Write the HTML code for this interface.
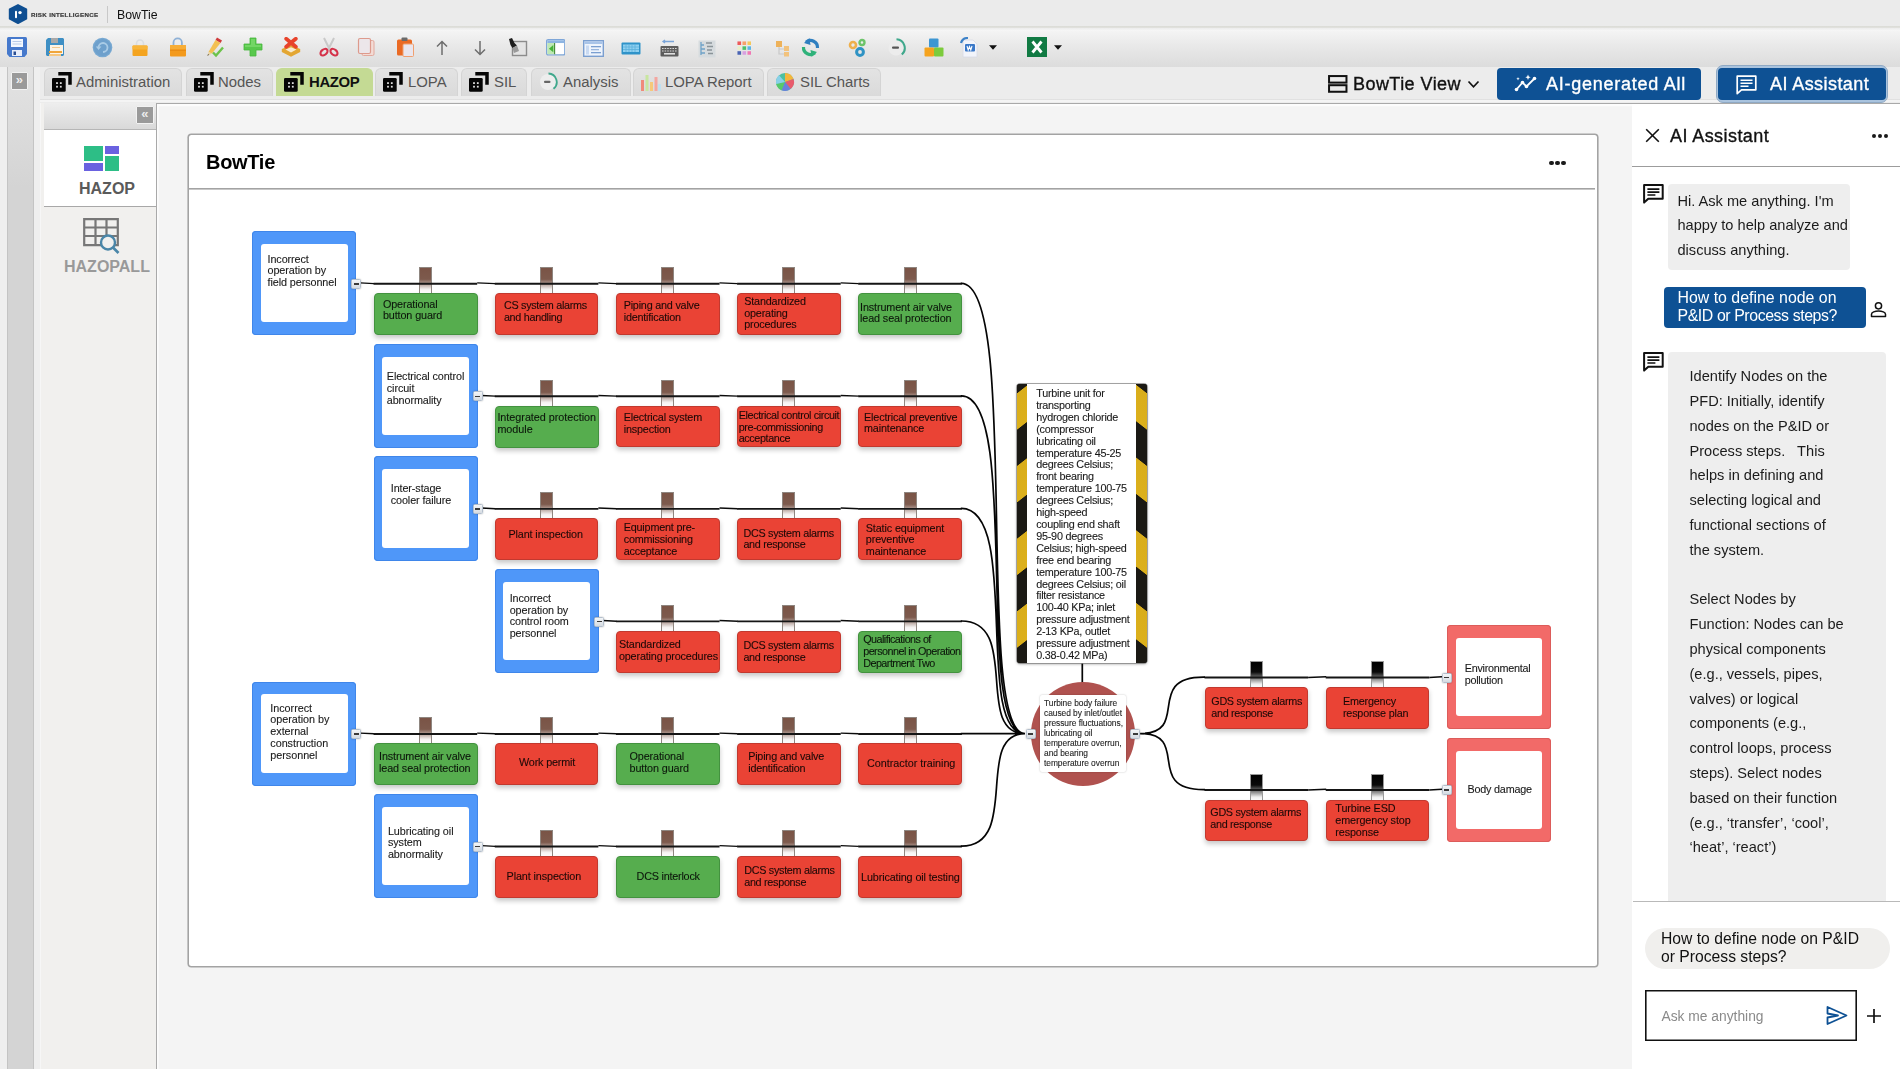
<!DOCTYPE html>
<html lang="en">
<head>
<meta charset="utf-8">
<title>BowTie</title>
<style>
*{box-sizing:border-box;margin:0;padding:0}
html,body{width:1900px;height:1069px;overflow:hidden;background:#f4f4f4;font-family:"Liberation Sans",sans-serif;color:#222}
.abs{position:absolute}
.gl{position:absolute;left:0;top:0;width:0;height:0;will-change:transform}
#titlebar{position:absolute;left:0;top:0;width:1900px;height:27px;background:#ebebeb}
#brand,#appname,#cardtitle,.g{will-change:transform}
#titlebar .sep{position:absolute;left:0;top:26px;width:1900px;height:2px;background:linear-gradient(#dadbd5,#e2e2de)}
#titlebar .sep2{position:absolute;left:0;top:28px;width:1900px;height:3px;background:linear-gradient(#ececec,#f7f7f7)}
#brand{position:absolute;left:30.8px;top:9.5px;font-size:6.2px;font-weight:bold;letter-spacing:.33px;-webkit-text-stroke:.2px #3a3a3a;color:#3a3a3a;white-space:nowrap;line-height:10px}
#tdiv{position:absolute;left:107px;top:6px;width:1px;height:17px;background:#c8c8c8}
#appname{position:absolute;left:117px;top:7.2px;font-size:12.3px;line-height:16px;color:#111;white-space:nowrap}
#toolbar{position:absolute;left:0;top:31px;width:1900px;height:36px;background:linear-gradient(#f4f4f4,#e9e9e9 40%,#dcdcdc)}
#tabrow{position:absolute;left:0;top:67px;width:1900px;height:36px;background:#ececec}
#tabline{position:absolute;left:40px;top:99px;width:1860px;height:3px;background:linear-gradient(#dfdfdf,#e2e2e2 33%,#f4f4f4 40%,#f4f4f4)}
.tab{position:absolute;top:68px;height:28px;border:1px solid #d4d4d4;border-bottom:none;border-radius:6px 6px 0 0;background:linear-gradient(#e3e3e3,#dadada);font-size:14.9px;color:#555;white-space:nowrap}
.tab span{position:absolute;top:4px;line-height:19px}
.tab svg{position:absolute;left:6.6px;top:3.2px}
.tab.on{background:#c4da94;border-color:#c4da94;color:#111}
.tab.on span{font-weight:bold;letter-spacing:-.35px}
#lstrip0{position:absolute;left:0;top:67px;width:7px;height:1002px;background:#efefef}
#lstrip{position:absolute;left:7px;top:67px;width:27px;height:1002px;background:linear-gradient(#e3e3e3,#d4d4d4 12%);border-left:1px solid #c4c4c4;border-right:1px solid #c4c4c4}
#lstrip2{position:absolute;left:34px;top:67px;width:6px;height:1002px;background:#efefef}
.cbtn{position:absolute;width:17.5px;height:18px;background:#9a9a9a;border:1.1px solid #f2f2f2;border-radius:1px;color:#ededed;font-size:13px;line-height:13.5px;text-align:center;font-weight:bold}
#side{position:absolute;left:40px;top:102.6px;width:117px;height:967px;background:#f1f0ee;border-left:1.2px solid #f6f6f6}
#sidehead{position:absolute;left:44px;top:102.6px;width:112.3px;height:27px;background:linear-gradient(#eeeeee,#d9d9d9);border-bottom:1.6px solid #b6b6b6}
#it1{position:absolute;left:44px;top:129.6px;width:112.3px;height:77.4px;background:#fff;border-bottom:1.5px solid #a8a8a8}
.sl{position:absolute;font-weight:bold;font-size:16px;white-space:nowrap;line-height:16px}
#main{position:absolute;left:156.2px;top:102.9px;width:1744px;height:967px;background:#f4f4f4;border-left:1.3px solid #a9a9a9;border-top:1.2px solid #a9a9a9;box-shadow:inset 1.6px 2.2px 0 0 #fcfcfc}
#card{position:absolute;left:189.2px;top:135.2px;width:1407.8px;height:831.3px;background:#fff;box-shadow:0 0 0 1.6px #a3a3a3;border-radius:2.5px}
#cardhead{position:absolute;left:0;top:0;width:1405.8px;height:52.6px;box-shadow:0 1.6px 0 0 #a3a3a3}
#cardtitle{position:absolute;left:16.8px;top:14.6px;font-size:20px;font-weight:bold;letter-spacing:-.3px;line-height:24px;color:#000}
.dots{position:absolute;width:16px;height:4px}
.dots i{position:absolute;top:0;width:4.1px;height:4.1px;border-radius:50%;background:#1a1a1a}

.thr,.con{position:absolute;width:104px;height:104.2px;border-radius:4px;background:#4f97f9;box-shadow:inset 0 0 0 1px #3f86ea}
.con{background:#f26a68;box-shadow:inset 0 0 0 1px #dc5c5a}
.thr i,.con i{position:absolute;left:8.6px;top:12.9px;width:86.8px;height:78.3px;background:#fff;border-radius:3px}
.bar{position:absolute;width:103.6px;height:41.7px;border-radius:4px;box-shadow:0 3px 5px rgba(0,0,0,.22)}
.bar.g{background:#56ad4e;border:1px solid #43923f}
.bar.r{background:#ea4335;border:1px solid #c2392f}
.post{position:absolute;width:13px;height:26px;border:.8px solid #8f8680;border-bottom:none;background:linear-gradient(#7a5446,#7d5a4d 45%,#bfaea8 68%,#f4f1f0 85%,#fff)}
.post.k{border-color:#999;background:linear-gradient(#000,#0a0a0a 40%,#8a8a8a 68%,#eee 88%,#fff)}
.bt,.tt,.ctx{position:absolute;white-space:nowrap;font-size:10.8px;line-height:11.85px;color:rgba(0,0,0,.86);-webkit-text-stroke:.12px rgba(0,0,0,.8)}
.tt{color:#222}
.hz{line-height:11.9px}
.ctx{line-height:9.95px;color:#2a2a2a}
.cb{position:absolute;width:10px;height:10px;background:linear-gradient(#f4f6f8,#d5dbe2);border:1px solid #b4bfcc;border-radius:1.5px;box-shadow:0 0 1.5px rgba(0,0,0,.35)}
.cb:after{content:"";position:absolute;left:1.5px;top:3.2px;width:5px;height:1.6px;background:#3a3a3a}
#haz{position:absolute;left:1016.8px;top:384.4px;width:129.8px;height:278.4px;border-radius:3px;overflow:hidden;background:#111;box-shadow:0 0 0 .7px #888,0 1px 3px rgba(0,0,0,.4)}
#hazl,#hazr{position:absolute;top:0;width:11px;height:100%}
#hazl{left:0;background:repeating-linear-gradient(142deg,#d9ad1b 7.7px,#dcb01c 35.7px,#1b1914 36.4px,#1b1914 64.3px,#d9ad1b 64.98px)}
#hazr{right:0;background:repeating-linear-gradient(218deg,#d9ad1b 7.7px,#dcb01c 35.7px,#1b1914 36.4px,#1b1914 64.3px,#d9ad1b 64.98px)}
#hazw{position:absolute;left:10.3px;top:0;width:109.2px;height:100%;background:#fff}
#circ{position:absolute;left:1031.3px;top:681.8px;width:103.8px;height:103.8px;border-radius:50%;background:#b0524f}
#circw{position:absolute;left:1040px;top:694.5px;width:86.4px;height:77.4px;background:#fff;border-radius:2px;box-shadow:0 0 2px rgba(0,0,0,.25)}

#panel{position:absolute;left:1632px;top:104px;width:268px;height:965px;background:#fff}
#phead{position:absolute;left:1632px;top:165.7px;width:268px;height:1.6px;background:#9c9c9c}
#ptitle{position:absolute;left:1670px;top:125px;font-size:18px;letter-spacing:.42px;line-height:22px;color:#111;white-space:nowrap;-webkit-text-stroke:.35px #111}
.bub{position:absolute;background:#eeeeee;border-radius:4px}
.ct{position:absolute;font-size:14.6px;line-height:24.8px;color:#1b1b1b;white-space:nowrap}
.ut{position:absolute;font-size:15.9px;line-height:18px;color:#fff;white-space:nowrap}
#pdiv{position:absolute;left:1633px;top:900.5px;width:267px;height:1.2px;background:#b9b9b9}
#pill{position:absolute;left:1644.5px;top:927.5px;width:245.5px;height:41.5px;border-radius:21px;background:#f0efed}
#inp{position:absolute;left:1645px;top:990px;width:212px;height:51px;box-shadow:inset 0 0 0 1.6px #111;background:#fff}
</style>
</head>
<body>
<div id="titlebar">
  <svg class="abs" style="left:8px;top:3px" width="20" height="22" viewBox="0 0 20 22"><path d="M10 2 18.3 6.3v9.5L10 20.1 1.7 15.8V6.3z" fill="#0f4f92" stroke="#0f4f92" stroke-width="1.8" stroke-linejoin="round"/><rect x="7" y="7.7" width="2" height="7.6" rx="1" fill="#fff"/><circle cx="12" cy="9.6" r="1.7" fill="#fff"/></svg>
  <div id="brand">RISK INTELLIGENCE</div>
  <div id="tdiv"></div>
  <div id="appname">BowTie</div>
  <div class="sep"></div><div class="sep2"></div>
</div>
<div id="toolbar">
<!-- save -->
<svg class="abs" style="left:7px;top:6px" width="20" height="20" viewBox="0 0 20 20"><path d="M0 1.5Q0 0 1.5 0h17Q20 0 20 1.5V17l-2.5 3h-15L0 17z" fill="#4679cc"/><rect x="4" y="2" width="12" height="8" fill="#f4f8ff"/><rect x="5.5" y="4" width="9" height="1" fill="#b9cbe8"/><rect x="5.5" y="6.5" width="9" height="1" fill="#b9cbe8"/><rect x="5" y="13" width="10" height="6" fill="#e8eefb"/><rect x="6.5" y="14.5" width="2.5" height="3.5" fill="#2c4f92"/></svg>
<!-- save as -->
<svg class="abs" style="left:45px;top:6px" width="20" height="20" viewBox="0 0 20 20"><path d="M1 3 3 1h15l1 1v16l-1 1H2l-1-1z" fill="#3e8fc4"/><rect x="6" y="1" width="7" height="5" fill="#a9a9a9"/><rect x="5" y="8" width="13" height="9" fill="#fbf3e6"/><rect x="4" y="14" width="13" height="2" fill="#f0a53a"/><rect x="4" y="17" width="12" height="2" fill="#f6c781"/><rect x="7" y="10" width="8" height="1" fill="#f3c98e"/></svg>
<!-- refresh -->
<svg class="abs" style="left:92px;top:6px" width="21" height="21" viewBox="0 0 21 21"><circle cx="10.5" cy="10.5" r="9.8" fill="#78a9d2"/><circle cx="10.5" cy="10.5" r="8.6" fill="#6ea0cc"/><path d="M6.5 10.5a4.5 4.5 0 1 1 4.5 4.5" fill="none" stroke="#a9cbe6" stroke-width="1.8"/><path d="M3.8 9.5 6.6 13l2.8-3.5z" fill="#a9cbe6"/></svg>
<!-- lock -->
<svg class="abs" style="left:130px;top:6px" width="20" height="20" viewBox="0 0 20 20"><path d="M6.5 9V6.5a3.5 3.5 0 0 1 7 0V9" fill="none" stroke="#d9dde2" stroke-width="1.6"/><rect x="2.5" y="8.5" width="15" height="10.5" rx="1" fill="#f4a420"/><rect x="2.5" y="8.5" width="15" height="4" rx="1" fill="#f8b53a"/></svg>
<!-- unlock -->
<svg class="abs" style="left:168px;top:6px" width="20" height="20" viewBox="0 0 20 20"><path d="M5.5 9V5.5a4.2 4.2 0 0 1 8.4 0V9" fill="none" stroke="#8fb1d6" stroke-width="1.8"/><rect x="2" y="8" width="16" height="11.5" rx="1" fill="#f39a1d"/><rect x="2" y="8" width="16" height="4" rx="1" fill="#f7ad36"/><rect x="2" y="13" width="16" height="1" fill="#e88c14"/></svg>
<!-- pencil -->
<svg class="abs" style="left:205px;top:5px" width="20" height="22" viewBox="0 0 20 22"><path d="M12 1.5 17 4.5 15.5 7 10.5 4z" fill="#cf3a3a"/><path d="M10.5 4 15.5 7 7 17.5 3.5 16z" fill="#f3c052"/><path d="M3.5 16 7 17.5 2.5 20z" fill="#e8d3a4"/><path d="M2.5 20 3.8 18.8 3 18z" fill="#222"/><path d="M8 16.5 11 19.5 18 11.5" fill="none" stroke="#6cc34a" stroke-width="2.4"/></svg>
<!-- plus -->
<svg class="abs" style="left:243px;top:6px" width="20" height="20" viewBox="0 0 20 20"><path d="M7 1h6v6h6v6h-6v6H7v-6H1V7h6z" fill="#58c84c" stroke="#48b63c" stroke-width=".8" stroke-linejoin="round"/><path d="M8 2h4v6h6v2H2V8h6z" fill="#7fdc70" opacity=".7"/></svg>
<!-- delete -->
<svg class="abs" style="left:281px;top:6px" width="20" height="20" viewBox="0 0 20 20"><path d="M.8 12 10 8 19.2 12V15L10 19.8.8 15z" fill="#e3a632"/><path d="M4.5 12.5 10 10.3 15.5 12.5 10 15.5z" fill="#f7ead0"/><path d="M5.2 1.8 14.8 9.8M14.8 1.8 5.2 9.8" stroke="#e8432b" stroke-width="3.8" stroke-linecap="round"/></svg>
<!-- scissors -->
<svg class="abs" style="left:319px;top:5px" width="20" height="22" viewBox="0 0 20 22"><path d="M5 2 11 14M15 2 9 14" stroke="#c9c9c9" stroke-width="2"/><ellipse cx="5" cy="16.2" rx="4" ry="2.7" transform="rotate(-40 5 16.2)" fill="none" stroke="#d5324a" stroke-width="2.1"/><ellipse cx="15" cy="16.2" rx="4" ry="2.7" transform="rotate(40 15 16.2)" fill="none" stroke="#d5324a" stroke-width="2.1"/></svg>
<!-- copy -->
<svg class="abs" style="left:357px;top:6px" width="20" height="20" viewBox="0 0 20 20"><rect x="5" y="3.5" width="12" height="15" rx="1.5" fill="#f3dcd6" stroke="#e2a89c" stroke-width="1"/><rect x="1.5" y="1.5" width="12" height="15" rx="1.5" fill="#ece6ea" stroke="#dd9a8c" stroke-width="1.2"/></svg>
<!-- paste -->
<svg class="abs" style="left:395px;top:5px" width="20" height="22" viewBox="0 0 20 22"><rect x="2" y="3.5" width="15" height="16" rx="1.5" fill="#ea6a24"/><rect x="6.5" y="1.5" width="6" height="3.5" rx="1" fill="#6a6a6a"/><rect x="8" y="8" width="10.5" height="12.5" rx="1" fill="#e9e6ee" stroke="#f0a070" stroke-width="1"/></svg>
<!-- up -->
<svg class="abs" style="left:434px;top:8px" width="16" height="18" viewBox="0 0 16 18"><path d="M8 16V2.5M3 7.5 8 2.5 13 7.5" fill="none" stroke="#6d6d6d" stroke-width="1.5"/></svg>
<!-- down -->
<svg class="abs" style="left:472px;top:8px" width="16" height="18" viewBox="0 0 16 18"><path d="M8 2v13.5M3 10.5 8 15.5 13 10.5" fill="none" stroke="#6d6d6d" stroke-width="1.5"/></svg>
<!-- stamp -->
<svg class="abs" style="left:508px;top:6px" width="20" height="20" viewBox="0 0 20 20"><rect x="4.5" y="4.5" width="14" height="14" fill="#e4e4e4" stroke="#8c8c8c" stroke-width="1.4"/><path d="M1 2 4 1 6.5 6 9 8.5 4.5 11 2.5 8z" fill="#1d1d1d"/><path d="M4.5 11 9 8.5 11 14 6 16z" fill="#9a9a9a"/></svg>
<!-- panel-left -->
<svg class="abs" style="left:545.5px;top:8px" width="19.5" height="16.5" viewBox="0 0 20 18" preserveAspectRatio="none"><rect x=".7" y=".7" width="18.6" height="16.6" rx="1.5" fill="#fff" stroke="#7ea6d8" stroke-width="1.4"/><rect x="1.4" y="1.4" width="17.2" height="3" fill="#8db4e2"/><rect x="1.4" y="4.4" width="7.6" height="12.2" fill="#bfe8b4"/><rect x="8.2" y="4.4" width="1.2" height="12.2" fill="#4a8f3c"/><path d="M7.5 6.5v8L3 10.5z" fill="#46b339"/></svg>
<!-- form -->
<svg class="abs" style="left:583px;top:9px" width="21" height="17" viewBox="0 0 21 17"><rect x=".7" y=".7" width="19.6" height="15.6" fill="#eef4fc" stroke="#7b9fd0" stroke-width="1.4"/><rect x="1.4" y="1.4" width="18.2" height="2.6" fill="#a9c4e8"/><rect x="3" y="5.5" width="3" height="9" fill="#c9daf2"/><rect x="8" y="6" width="10" height="1.3" fill="#7b9fd0"/><rect x="8" y="9" width="8" height="1.3" fill="#9ab6dd"/><rect x="8" y="12" width="10" height="1.3" fill="#7b9fd0"/></svg>
<!-- keyboard blue -->
<svg class="abs" style="left:621px;top:11px" width="20" height="13" viewBox="0 0 20 13"><rect x=".5" y=".5" width="19" height="12" rx="1" fill="#2f93c9"/><rect x="2" y="2.5" width="16" height="7.5" fill="#8fd0f0"/><path d="M2 5h16M2 7.5h16M5 2.5v7.5M8 2.5v7.5M11 2.5v7.5M14 2.5v7.5" stroke="#5ab0dc" stroke-width=".8"/></svg>
<!-- keyboard gray -->
<svg class="abs" style="left:660px;top:8px" width="19" height="19" viewBox="0 0 19 19"><path d="M4 2.5h10M5 1l-2 1.5L5 4" fill="none" stroke="#7aa4d8" stroke-width="1.3"/><rect x=".5" y="7" width="18" height="10.5" rx="1" fill="#5d5d5d"/><path d="M2 9.5h15M2 12h15" stroke="#d8d8d8" stroke-width="1.2" stroke-dasharray="1.6 1"/><rect x="4" y="14" width="11" height="1.6" fill="#e0e0e0"/></svg>
<!-- tree -->
<svg class="abs" style="left:698px;top:9px" width="18" height="18" viewBox="0 0 18 18"><rect x=".5" y=".5" width="17" height="17" fill="#d6dbde"/><path d="M3 2v13M3 5h3M3 9h4M3 13h4" stroke="#6fa3c8" stroke-width="1.3" fill="none"/><path d="M8 3h6M9 6.5h6M9 10h5M10 13.5h5" stroke="#8a9499" stroke-width="1.5"/></svg>
<!-- colour grid -->
<svg class="abs" style="left:736.5px;top:9.5px" width="14.6" height="14.2" viewBox="0 0 16 16" preserveAspectRatio="none"><rect x=".5" y=".5" width="4" height="4" fill="#ee5a5a"/><rect x="6" y=".5" width="4" height="4" fill="#f5a06a"/><rect x="11.5" y=".5" width="4" height="4" fill="#f5c85a"/><rect x=".5" y="6" width="4" height="4" fill="#e9f0c8"/><rect x="6" y="6" width="4" height="4" fill="#4cc068"/><rect x="11.5" y="6" width="4" height="4" fill="#5ab4e6"/><rect x=".5" y="11.5" width="4" height="4" fill="#4a64b4"/><rect x="6" y="11.5" width="4" height="4" fill="#d8a0e0"/><rect x="11.5" y="11.5" width="4" height="4" fill="#f078b4"/></svg>
<!-- hierarchy -->
<svg class="abs" style="left:775px;top:9px" width="15" height="17" viewBox="0 0 15 17"><rect x="1" y="1" width="6" height="6" fill="#eeb25a"/><rect x="9" y="6" width="5" height="5" fill="#f2c27c"/><rect x="9" y="12" width="5" height="4.5" fill="#f2c27c"/><path d="M4 7v7h5M4 9h5" fill="none" stroke="#c8c8c8" stroke-width="1.2"/></svg>
<!-- sync -->
<svg class="abs" style="left:801px;top:6px" width="19" height="21" viewBox="0 0 19 21"><path d="M16.5 11A7 7 0 0 0 5 5.2" fill="none" stroke="#2f7fc0" stroke-width="3.2"/><path d="M8.5 1 3 6l6.5 2z" fill="#2f7fc0"/><path d="M2.5 10A7 7 0 0 0 14 15.8" fill="none" stroke="#2fb27a" stroke-width="3.2"/><path d="M10.5 20 16 15l-6.5-2z" fill="#2fb27a"/></svg>
<!-- gears -->
<svg class="abs" style="left:848px;top:7px" width="19" height="20" viewBox="0 0 19 20"><circle cx="5" cy="7" r="3" fill="none" stroke="#efb04c" stroke-width="2.6"/><circle cx="14" cy="4.5" r="2.5" fill="none" stroke="#6dc46a" stroke-width="2.4"/><circle cx="12" cy="14" r="3.4" fill="none" stroke="#2f93c4" stroke-width="3"/></svg>
<!-- gauge -->
<svg class="abs" style="left:888px;top:6px" width="19" height="21" viewBox="0 0 19 21"><circle cx="8" cy="11" r="7.5" fill="#ececec"/><path d="M8.5 2.3A8.7 8.7 0 0 1 13.8 17.5" fill="none" stroke="#3fa88c" stroke-width="2"/><rect x="4" y="9.5" width="7" height="2.2" rx="1" fill="#555"/></svg>
<!-- blocks -->
<svg class="abs" style="left:924px;top:7px" width="20" height="19" viewBox="0 0 20 19"><rect x="5" y=".5" width="9.5" height="9" rx="1" fill="#3d96d2"/><rect x=".5" y="9.5" width="9.5" height="9" rx="1" fill="#f5a31e"/><rect x="10" y="9.5" width="9.5" height="9" rx="1" fill="#7ccb3c"/></svg>
<!-- word -->
<svg class="abs" style="left:960px;top:6px" width="19" height="21" viewBox="0 0 19 21"><path d="M3 3h10l4 4v13H3z" fill="#f2f4fa" stroke="#d8dbe6" stroke-width=".8"/><path d="M1 6a7 7 0 0 1 7-5" fill="none" stroke="#3d82c8" stroke-width="2.2"/><rect x="5" y="7" width="10" height="7.5" rx="1" fill="#3a78c8"/><path d="M7 9l1.2 4 1.3-3.5 1.3 3.5L12 9" fill="none" stroke="#fff" stroke-width="1.1"/></svg>
<svg class="abs" style="left:989px;top:14px" width="8" height="5" viewBox="0 0 8 5"><path d="M0 .3h8L4 4.8z" fill="#111"/></svg>
<!-- excel -->
<svg class="abs" style="left:1027px;top:6px" width="20" height="20" viewBox="0 0 20 20"><rect width="20" height="20" fill="#117a43"/><path d="M5.5 4.5 14.5 15.5M14.5 4.5 5.5 15.5" stroke="#fff" stroke-width="2.8"/></svg>
<svg class="abs" style="left:1054px;top:14px" width="8" height="5" viewBox="0 0 8 5"><path d="M0 .3h8L4 4.8z" fill="#111"/></svg>
</div>
<div id="tabrow"></div>
<div id="lstrip0"></div><div id="lstrip"></div><div id="lstrip2"></div>
<div class="cbtn" style="left:10.6px;top:71.6px">&raquo;</div>
<div id="tabline"></div>
<svg width="0" height="0" style="position:absolute"><defs>
<g id="ticon"><rect x="0" y="6" width="13.7" height="13.8" rx="1.3" fill="#050505"/><path d="M6.3 1.7H18V12.8" fill="none" stroke="#050505" stroke-width="3.5"/><rect x="4.1" y="10.2" width="1.8" height="1.8" fill="#ddd"/><rect x="7.9" y="10.2" width="1.8" height="1.8" fill="#ddd"/><rect x="4.1" y="13.8" width="1.8" height="1.8" fill="#ddd"/><rect x="7.9" y="13.8" width="1.8" height="1.8" fill="#ddd"/></g>
</defs></svg>
<div class="tab" style="left:44px;width:138px"><svg width="20" height="20"><use href="#ticon"/></svg><span style="left:31px">Administration</span></div>
<div class="tab" style="left:186px;width:87px"><svg width="20" height="20"><use href="#ticon"/></svg><span style="left:31px">Nodes</span></div>
<div class="tab on" style="left:276px;width:97px"><svg width="20" height="20"><use href="#ticon"/></svg><span style="left:32px">HAZOP</span></div>
<div class="tab" style="left:375px;width:83px"><svg width="20" height="20"><use href="#ticon"/></svg><span style="left:32px">LOPA</span></div>
<div class="tab" style="left:461px;width:66px"><svg width="20" height="20"><use href="#ticon"/></svg><span style="left:32px">SIL</span></div>
<div class="tab" style="left:531px;width:100px"><svg width="20" height="20" viewBox="0 0 20 20"><circle cx="9" cy="10" r="8" fill="#ededed"/><path d="M9.5 1.5A8.6 8.6 0 0 1 14.5 16.8" fill="none" stroke="#3fa88c" stroke-width="1.8"/><rect x="5" y="8.8" width="6.5" height="2.2" rx="1" fill="#666"/></svg><span style="left:31px">Analysis</span></div>
<div class="tab" style="left:633px;width:131px"><svg width="20" height="20" viewBox="0 0 20 20"><rect x="0" y="8" width="3" height="11" fill="#f08a7a"/><rect x="4.5" y="3" width="3" height="16" fill="#c8e6a0"/><rect x="9" y="10" width="3" height="9" fill="#f6c97a"/><rect x="13.5" y="5" width="3" height="14" fill="#f4a6a0"/><rect x="17" y="12" width="3" height="7" fill="#bfe0f0"/></svg><span style="left:31px">LOPA Report</span></div>
<div class="tab" style="left:767px;width:114px"><svg width="20" height="20" viewBox="0 0 20 20"><circle cx="10" cy="10" r="9" fill="#4cc0a0"/><path d="M10 10V1a9 9 0 0 1 8.5 6z" fill="#f3b63c"/><path d="M10 10 18.5 7a9 9 0 0 1-3 10z" fill="#e85a6c"/><path d="M10 10 15.5 17a9 9 0 0 1-9 1.2z" fill="#6a7fdc"/><path d="M10 10 6.5 18.2A9 9 0 0 1 1.2 12z" fill="#58c86a"/><path d="M10 10 1.2 12A9 9 0 0 1 4 3.3z" fill="#8ad0e8"/></svg><span style="left:32px">SIL Charts</span></div>
<!-- right buttons -->
<svg class="abs" style="left:1327.5px;top:75px" width="20" height="18.3" viewBox="0 0 21 19" preserveAspectRatio="none"><rect x="1.1" y="1.1" width="18.3" height="6.8" fill="none" stroke="#111" stroke-width="2.1"/><rect x="1.1" y="10.6" width="18.3" height="6.8" fill="none" stroke="#111" stroke-width="2.1"/></svg>
<div class="abs" style="left:1353px;top:73px;font-size:18px;letter-spacing:.45px;line-height:22px;color:#111;white-space:nowrap;will-change:transform;-webkit-text-stroke:.35px #111">BowTie View</div>
<svg class="abs" style="left:1467px;top:80px" width="13" height="9" viewBox="0 0 13 9"><path d="M1.5 1.5 6.5 6.8 11.5 1.5" fill="none" stroke="#111" stroke-width="1.7"/></svg>
<div class="abs" style="left:1497px;top:68px;width:204px;height:32px;background:#0e5194;border-radius:4px"></div>
<svg class="abs" style="left:1514px;top:74px" width="24" height="18" viewBox="0 0 24 18"><path d="M2.5 15.5 8.5 8.5 12.5 12.5 20.5 4.5" fill="none" stroke="#fff" stroke-width="1.8"/><circle cx="2.5" cy="15.5" r="1.8" fill="#fff"/><circle cx="8.5" cy="8.5" r="1.8" fill="#fff"/><circle cx="12.5" cy="12.5" r="1.8" fill="#fff"/><circle cx="20.5" cy="4.5" r="1.8" fill="#fff"/><path d="M14 .5l.8 1.9 1.9.8-1.9.8L14 5.9l-.8-1.9-1.9-.8 1.9-.8zM4 3l.5 1.2 1.2.5-1.2.5L4 6.4 3.5 5.2 2.3 4.7l1.2-.5z" fill="#fff"/></svg>
<div class="abs" style="left:1546px;top:73px;font-size:18px;letter-spacing:.75px;line-height:22px;color:#fff;white-space:nowrap;will-change:transform;-webkit-text-stroke:.35px #fff">AI-generated All</div>
<div class="abs" style="left:1716px;top:65px;width:172px;height:37.5px;background:#a9c3de;border-radius:7px;border:1px solid #8fa9c4"></div>
<div class="abs" style="left:1718px;top:68px;width:168px;height:31.5px;background:#0e5194;border-radius:4px"></div>
<svg class="abs" style="left:1736px;top:75px" width="21" height="20" viewBox="0 0 21 20"><path d="M1.2 1.2h18.6v13.6H5.5L1.2 18.6z" fill="none" stroke="#fff" stroke-width="1.7" stroke-linejoin="round"/><path d="M4.5 5.2h12M4.5 8.2h12M4.5 11.2h8" stroke="#fff" stroke-width="1.5"/></svg>
<div class="abs" style="left:1770px;top:73px;font-size:18px;letter-spacing:.42px;line-height:22px;color:#fff;white-space:nowrap;will-change:transform;-webkit-text-stroke:.35px #fff">AI Assistant</div>
<!-- side -->
<div id="side"></div>
<div id="main"></div>
<div id="sidehead"></div>
<div class="cbtn" style="left:136.2px;top:106.4px">&laquo;</div>
<div id="it1"></div>
<svg class="abs" style="left:84px;top:146px" width="35" height="25" viewBox="0 0 35 25"><rect x="0" y="0" width="19" height="15" fill="#2dbe86"/><rect x="21" y="0" width="14" height="8" fill="#6a62e0"/><rect x="0" y="17" width="19" height="8" fill="#6a62e0"/><rect x="21" y="10" width="14" height="15" fill="#2dbe86"/></svg>
<div class="sl" style="left:79px;top:181px;color:#5a5a5a">HAZOP</div>
<svg class="abs" style="left:83px;top:218px" width="37" height="36" viewBox="0 0 37 36"><path d="M1.2 1.2h33.6v26H1.2zM1.2 9.5h33.6M1.2 18h33.6M12.5 1.2v26M23.5 1.2v26" fill="none" stroke="#777" stroke-width="2.2"/><circle cx="25" cy="24.5" r="7" fill="#f1f0ee" stroke="#4a86a8" stroke-width="2.4"/><path d="M30 29.5 35.5 35" stroke="#4a86a8" stroke-width="2.6"/></svg>
<div class="sl" style="left:64px;top:259px;color:#999">HAZOPALL</div>
<!-- card -->
<div id="card"><div id="cardhead"><div id="cardtitle">BowTie</div><div class="dots" style="left:1360.3px;top:25.5px"><i style="left:0"></i><i style="left:6px"></i><i style="left:12px"></i></div></div></div>
<div class="gl">
<div class="post" style="left:418.9px;top:267.25px"></div>
<div class="post" style="left:540.07px;top:267.25px"></div>
<div class="post" style="left:661.24px;top:267.25px"></div>
<div class="post" style="left:782.41px;top:267.25px"></div>
<div class="post" style="left:903.58px;top:267.25px"></div>
<div class="post" style="left:540.07px;top:379.8px"></div>
<div class="post" style="left:661.24px;top:379.8px"></div>
<div class="post" style="left:782.41px;top:379.8px"></div>
<div class="post" style="left:903.58px;top:379.8px"></div>
<div class="post" style="left:540.07px;top:492.35px"></div>
<div class="post" style="left:661.24px;top:492.35px"></div>
<div class="post" style="left:782.41px;top:492.35px"></div>
<div class="post" style="left:903.58px;top:492.35px"></div>
<div class="post" style="left:661.24px;top:604.9px"></div>
<div class="post" style="left:782.41px;top:604.9px"></div>
<div class="post" style="left:903.58px;top:604.9px"></div>
<div class="post" style="left:418.9px;top:717.45px"></div>
<div class="post" style="left:540.07px;top:717.45px"></div>
<div class="post" style="left:661.24px;top:717.45px"></div>
<div class="post" style="left:782.41px;top:717.45px"></div>
<div class="post" style="left:903.58px;top:717.45px"></div>
<div class="post" style="left:540.07px;top:830px"></div>
<div class="post" style="left:661.24px;top:830px"></div>
<div class="post" style="left:782.41px;top:830px"></div>
<div class="post" style="left:903.58px;top:830px"></div>
<div class="post k" style="left:1249.8px;top:661px"></div>
<div class="post k" style="left:1371px;top:661px"></div>
<div class="post k" style="left:1249.8px;top:773.5px"></div>
<div class="post k" style="left:1371px;top:773.5px"></div>
<svg class="abs" style="left:0;top:0;pointer-events:none" width="1900" height="1069" viewBox="0 0 1900 1069"><path d="M360.2 282.9L374.1 283.6M477.2 282.9L495.27 283.6M598.37 282.9L616.44 283.6M719.54 282.9L737.61 283.6M840.71 282.9L858.78 283.6M481.6 395.45L495.27 396.15M598.37 395.45L616.44 396.15M719.54 395.45L737.61 396.15M840.71 395.45L858.78 396.15M481.6 508L495.27 508.7M598.37 508L616.44 508.7M719.54 508L737.61 508.7M840.71 508L858.78 508.7M602.8 620.55L616.44 621.25M719.54 620.55L737.61 621.25M840.71 620.55L858.78 621.25M360.2 733.1L374.1 733.8M477.2 733.1L495.27 733.8M598.37 733.1L616.44 733.8M719.54 733.1L737.61 733.8M840.71 733.1L858.78 733.8M481.6 845.65L495.27 846.35M598.37 845.65L616.44 846.35M719.54 845.65L737.61 846.35M840.71 845.65L858.78 846.35M1308.1 677.5L1326.2 676.7M1429.3 677.5L1442 676.7M1308.1 790L1326.2 789.2M1429.3 790L1442 789.2" fill="none" stroke="#0a0a0a" stroke-width="1.45"/><path d="M373.6 283.75H477.2M494.77 283.75H598.37M615.94 283.75H719.54M737.11 283.75H840.71M858.28 283.75H961.88M494.77 396.3H598.37M615.94 396.3H719.54M737.11 396.3H840.71M858.28 396.3H961.88M494.77 508.85H598.37M615.94 508.85H719.54M737.11 508.85H840.71M858.28 508.85H961.88M615.94 621.4H719.54M737.11 621.4H840.71M858.28 621.4H961.88M373.6 733.95H477.2M494.77 733.95H598.37M615.94 733.95H719.54M737.11 733.95H840.71M858.28 733.95H961.88M494.77 846.5H598.37M615.94 846.5H719.54M737.11 846.5H840.71M858.28 846.5H961.88M1204.5 677.5H1308.1M1325.7 677.5H1429.3M1204.5 790H1308.1M1325.7 790H1429.3" fill="none" stroke="#151515" stroke-width="1.9"/><path d="M960.8 283.35H961.3C1021.3 283.35 973.5 733.6 1025 733.6M960.8 395.9H961.3C1021.3 395.9 973.5 733.6 1025 733.6M960.8 508.45H961.3C1021.3 508.45 973.5 733.6 1025 733.6M960.8 621H961.3C1021.3 621 973.5 733.6 1025 733.6M960.8 733.55H1025M960.8 846.1H961.3C1021.3 846.1 973.5 733.6 1025 733.6M1140.1 733.6C1191.6 733.6 1143.5 677.2 1203.5 677.2H1205M1140.1 733.6C1191.6 733.6 1143.5 789.7 1203.5 789.7H1205M1082.3 662V683" fill="none" stroke="#050505" stroke-width="1.7"/></svg>
<div id="haz"><div id="hazl"></div><div id="hazr"></div><div id="hazw"></div></div>
<div class="tt hz" style="left:1036.2px;top:388px;letter-spacing:-0.23px">Turbine unit for<br>transporting<br>hydrogen chloride<br>(compressor<br>lubricating oil<br>temperature 45-25<br>degrees Celsius;<br>front bearing<br>temperature 100-75<br>degrees Celsius;<br>high-speed<br>coupling end shaft<br>95-90 degrees<br>Celsius; high-speed<br>free end bearing<br>temperature 100-75<br>degrees Celsius; oil<br>filter resistance<br>100-40 KPa; inlet<br>pressure adjustment<br>2-13 KPa, outlet<br>pressure adjustment<br>0.38-0.42 MPa)</div>
<div id="circ"></div><div id="circw"></div>
<div class="ctx" style="left:1044px;top:699.3px;letter-spacing:-0.03px;font-size:8.4px">Turbine body failure<br>caused by inlet/outlet<br>pressure fluctuations,<br>lubricating oil<br>temperature overrun,<br>and bearing<br>temperature overrun</div>
<div class="thr" style="left:252.2px;top:231.3px"><i></i></div>
<div class="tt" style="left:267.5px;top:253.5px;letter-spacing:-0.08px">Incorrect<br>operation by<br>field personnel</div>
<div class="bar g" style="left:373.6px;top:293.25px"></div>
<div class="bt" style="left:382.9px;top:298.6px;letter-spacing:-0.11px">Operational<br>button guard</div>
<div class="bar r" style="left:494.77px;top:293.25px"></div>
<div class="bt" style="left:503.9px;top:299.7px;letter-spacing:-0.29px">CS system alarms<br>and handling</div>
<div class="bar r" style="left:615.94px;top:293.25px"></div>
<div class="bt" style="left:623.7px;top:299.7px;letter-spacing:-0.21px">Piping and valve<br>identification</div>
<div class="bar r" style="left:737.11px;top:293.25px"></div>
<div class="bt" style="left:744.2px;top:295.7px;letter-spacing:-0.17px">Standardized<br>operating<br>procedures</div>
<div class="bar g" style="left:858.28px;top:293.25px"></div>
<div class="bt" style="left:860px;top:301.5px;letter-spacing:-0.11px">Instrument air valve<br>lead seal protection</div>
<div class="cb" style="left:351.4px;top:278.85px"></div>
<div class="thr" style="left:373.6px;top:343.85px"><i></i></div>
<div class="tt" style="left:386.8px;top:371.2px;letter-spacing:-0.1px">Electrical control<br>circuit<br>abnormality</div>
<div class="bar g" style="left:494.77px;top:405.8px"></div>
<div class="bt" style="left:497.4px;top:412.3px;letter-spacing:-0.02px">Integrated protection<br>module</div>
<div class="bar r" style="left:615.94px;top:405.8px"></div>
<div class="bt" style="left:623.7px;top:412.3px;letter-spacing:-0.16px">Electrical system<br>inspection</div>
<div class="bar r" style="left:737.11px;top:405.8px"></div>
<div class="bt" style="left:738.7px;top:409.7px;letter-spacing:-0.38px">Electrical control circuit<br>pre-commissioning<br>acceptance</div>
<div class="bar r" style="left:858.28px;top:405.8px"></div>
<div class="bt" style="left:864px;top:411.5px;letter-spacing:-0.15px">Electrical preventive<br>maintenance</div>
<div class="cb" style="left:472.8px;top:391.4px"></div>
<div class="thr" style="left:373.6px;top:456.4px"><i></i></div>
<div class="tt" style="left:390.8px;top:482.8px;letter-spacing:-0.11px">Inter-stage<br>cooler failure</div>
<div class="bar r" style="left:494.77px;top:518.35px"></div>
<div class="bt" style="left:508.4px;top:528.9px;letter-spacing:-0.11px">Plant inspection</div>
<div class="bar r" style="left:615.94px;top:518.35px"></div>
<div class="bt" style="left:623.7px;top:522.3px;letter-spacing:-0.18px">Equipment pre-<br>commissioning<br>acceptance</div>
<div class="bar r" style="left:737.11px;top:518.35px"></div>
<div class="bt" style="left:743.4px;top:527.6px;letter-spacing:-0.29px">DCS system alarms<br>and response</div>
<div class="bar r" style="left:858.28px;top:518.35px"></div>
<div class="bt" style="left:865.8px;top:522.6px;letter-spacing:-0.13px">Static equipment<br>preventive<br>maintenance</div>
<div class="cb" style="left:472.8px;top:503.95px"></div>
<div class="thr" style="left:494.8px;top:568.95px"><i></i></div>
<div class="tt" style="left:509.7px;top:592.8px;letter-spacing:-0.08px">Incorrect<br>operation by<br>control room<br>personnel</div>
<div class="bar r" style="left:615.94px;top:630.9px"></div>
<div class="bt" style="left:618.9px;top:638.9px;letter-spacing:-0.15px">Standardized<br>operating procedures</div>
<div class="bar r" style="left:737.11px;top:630.9px"></div>
<div class="bt" style="left:743.4px;top:640.2px;letter-spacing:-0.29px">DCS system alarms<br>and response</div>
<div class="bar g" style="left:858.28px;top:630.9px"></div>
<div class="bt" style="left:863.2px;top:634.4px;letter-spacing:-0.54px">Qualifications of<br>personnel in Operation<br>Department Two</div>
<div class="cb" style="left:594px;top:616.5px"></div>
<div class="thr" style="left:252.2px;top:681.5px"><i></i></div>
<div class="tt" style="left:270.3px;top:702.6px;letter-spacing:-0.03px">Incorrect<br>operation by<br>external<br>construction<br>personnel</div>
<div class="bar g" style="left:373.6px;top:743.45px"></div>
<div class="bt" style="left:379px;top:751px;letter-spacing:-0.11px">Instrument air valve<br>lead seal protection</div>
<div class="bar r" style="left:494.77px;top:743.45px"></div>
<div class="bt" style="left:519px;top:757px;letter-spacing:-0.17px">Work permit</div>
<div class="bar g" style="left:615.94px;top:743.45px"></div>
<div class="bt" style="left:629.5px;top:751px;letter-spacing:-0.11px">Operational<br>button guard</div>
<div class="bar r" style="left:737.11px;top:743.45px"></div>
<div class="bt" style="left:748.2px;top:751px;letter-spacing:-0.21px">Piping and valve<br>identification</div>
<div class="bar r" style="left:858.28px;top:743.45px"></div>
<div class="bt" style="left:867.1px;top:757.8px;letter-spacing:-0.03px">Contractor training</div>
<div class="cb" style="left:351.4px;top:729.05px"></div>
<div class="thr" style="left:373.6px;top:794.05px"><i></i></div>
<div class="tt" style="left:387.9px;top:825.5px;letter-spacing:-0.07px">Lubricating oil<br>system<br>abnormality</div>
<div class="bar r" style="left:494.77px;top:856px"></div>
<div class="bt" style="left:506.6px;top:870.7px;letter-spacing:-0.11px">Plant inspection</div>
<div class="bar g" style="left:615.94px;top:856px"></div>
<div class="bt" style="left:636.6px;top:870.7px;letter-spacing:-0.22px">DCS interlock</div>
<div class="bar r" style="left:737.11px;top:856px"></div>
<div class="bt" style="left:744.2px;top:865px;letter-spacing:-0.29px">DCS system alarms<br>and response</div>
<div class="bar r" style="left:858.28px;top:856px"></div>
<div class="bt" style="left:861px;top:871.5px;letter-spacing:-0.12px">Lubricating oil testing</div>
<div class="cb" style="left:472.8px;top:841.6px"></div>
<div class="con" style="left:1447px;top:625.3px"><i></i></div>
<div class="tt" style="left:1464.7px;top:662.8px;letter-spacing:-0.25px">Environmental<br>pollution</div>
<div class="bar r" style="left:1204.5px;top:687px"></div>
<div class="bt" style="left:1211.3px;top:696.3px;letter-spacing:-0.31px">GDS system alarms<br>and response</div>
<div class="bar r" style="left:1325.7px;top:687px"></div>
<div class="bt" style="left:1342.9px;top:696.3px;letter-spacing:-0.18px">Emergency<br>response plan</div>
<div class="cb" style="left:1441.5px;top:672.6px"></div>
<div class="con" style="left:1447px;top:737.9px"><i></i></div>
<div class="tt" style="left:1467.4px;top:783.9px;letter-spacing:-0.19px">Body damage</div>
<div class="bar r" style="left:1204.5px;top:799.5px"></div>
<div class="bt" style="left:1210.3px;top:807.3px;letter-spacing:-0.31px">GDS system alarms<br>and response</div>
<div class="bar r" style="left:1325.7px;top:799.5px"></div>
<div class="bt" style="left:1335.3px;top:803.4px;letter-spacing:-0.11px">Turbine ESD<br>emergency stop<br>response</div>
<div class="cb" style="left:1441.5px;top:785.1px"></div>
<div class="cb" style="left:1025.9px;top:728.8px"></div>
<div class="cb" style="left:1130.1px;top:728.8px"></div>
</div>
<div class="gl">
<div id="panel"></div>
<svg class="abs" style="left:1645px;top:128px" width="15" height="15" viewBox="0 0 15 15"><path d="M1.2 1.2 13.8 13.8M13.8 1.2 1.2 13.8" stroke="#111" stroke-width="1.6"/></svg>
<div id="ptitle">AI Assistant</div>
<div class="dots" style="left:1872.3px;top:134.3px"><i style="left:0"></i><i style="left:6px"></i><i style="left:12px"></i></div>
<div id="phead"></div>
<svg width="0" height="0" style="position:absolute"><defs><g id="cicon"><path d="M1.1 1.1h18.6v13.6H5.3L1.1 18.6z" fill="none" stroke="#111" stroke-width="2" stroke-linejoin="round"/><path d="M4.4 5.2h12M4.4 8.1h12M4.4 11h8" stroke="#111" stroke-width="1.7"/></g></defs></svg>
<svg class="abs" style="left:1643px;top:184px" width="21" height="20"><use href="#cicon"/></svg>
<div class="bub" style="left:1667.5px;top:183.5px;width:182px;height:86.5px"></div>
<div class="ct" style="left:1677.5px;top:188.5px">Hi. Ask me anything. I'm<br>happy to help analyze and<br>discuss anything.</div>
<div class="bub" style="left:1663.5px;top:286.5px;width:202.5px;height:41px;background:#0e5194"></div>
<div class="ut" style="left:1677.5px;top:288.5px">How to define node on<br><span style="letter-spacing:-.42px">P&amp;ID or Process steps?</span></div>
<svg class="abs" style="left:1870px;top:301px" width="17" height="17" viewBox="0 0 17 17"><circle cx="8.5" cy="4.8" r="3.1" fill="none" stroke="#111" stroke-width="1.5"/><path d="M1.5 15.5v-2.2c0-2 3.5-3.3 7-3.3s7 1.3 7 3.3v2.2z" fill="none" stroke="#111" stroke-width="1.5" stroke-linejoin="round"/></svg>
<svg class="abs" style="left:1643px;top:352px" width="21" height="20"><use href="#cicon"/></svg>
<div class="bub" style="left:1667.5px;top:351.5px;width:218px;height:549px;border-radius:4px 4px 0 0"></div>
<div class="ct" style="left:1689.5px;top:364.3px">Identify Nodes on the<br>PFD: Initially, identify<br>nodes on the P&amp;ID or<br>Process steps. &nbsp; This<br>helps in defining and<br>selecting logical and<br>functional sections of<br>the system.<br><br>Select Nodes by<br>Function: Nodes can be<br>physical components<br>(e.g., vessels, pipes,<br>valves) or logical<br>components (e.g.,<br>control loops, process<br>steps). Select nodes<br>based on their function<br>(e.g., &lsquo;transfer&rsquo;, &lsquo;cool&rsquo;,<br>&lsquo;heat&rsquo;, &lsquo;react&rsquo;)</div>
<div id="pdiv"></div>
<div id="pill"></div>
<div class="ut" style="left:1661px;top:930.2px;color:#111;font-size:15.7px">How to define node on P&amp;ID<br>or Process steps?</div>
<div id="inp"></div>
<div class="abs" style="left:1661.5px;top:1007.6px;font-size:13.8px;line-height:18px;color:#8a8a8a;white-space:nowrap">Ask me anything</div>
<svg class="abs" style="left:1826px;top:1005px" width="22" height="21" viewBox="0 0 22 21"><path d="M1.5 2 20.5 10.5 1.5 19 1.5 12.5 12 10.5 1.5 8.5z" fill="none" stroke="#0e5194" stroke-width="1.8" stroke-linejoin="round"/></svg>
<svg class="abs" style="left:1866px;top:1008px" width="16" height="16" viewBox="0 0 16 16"><path d="M8 1v14M1 8h14" stroke="#111" stroke-width="1.7"/></svg>
</div>

</body>
</html>
